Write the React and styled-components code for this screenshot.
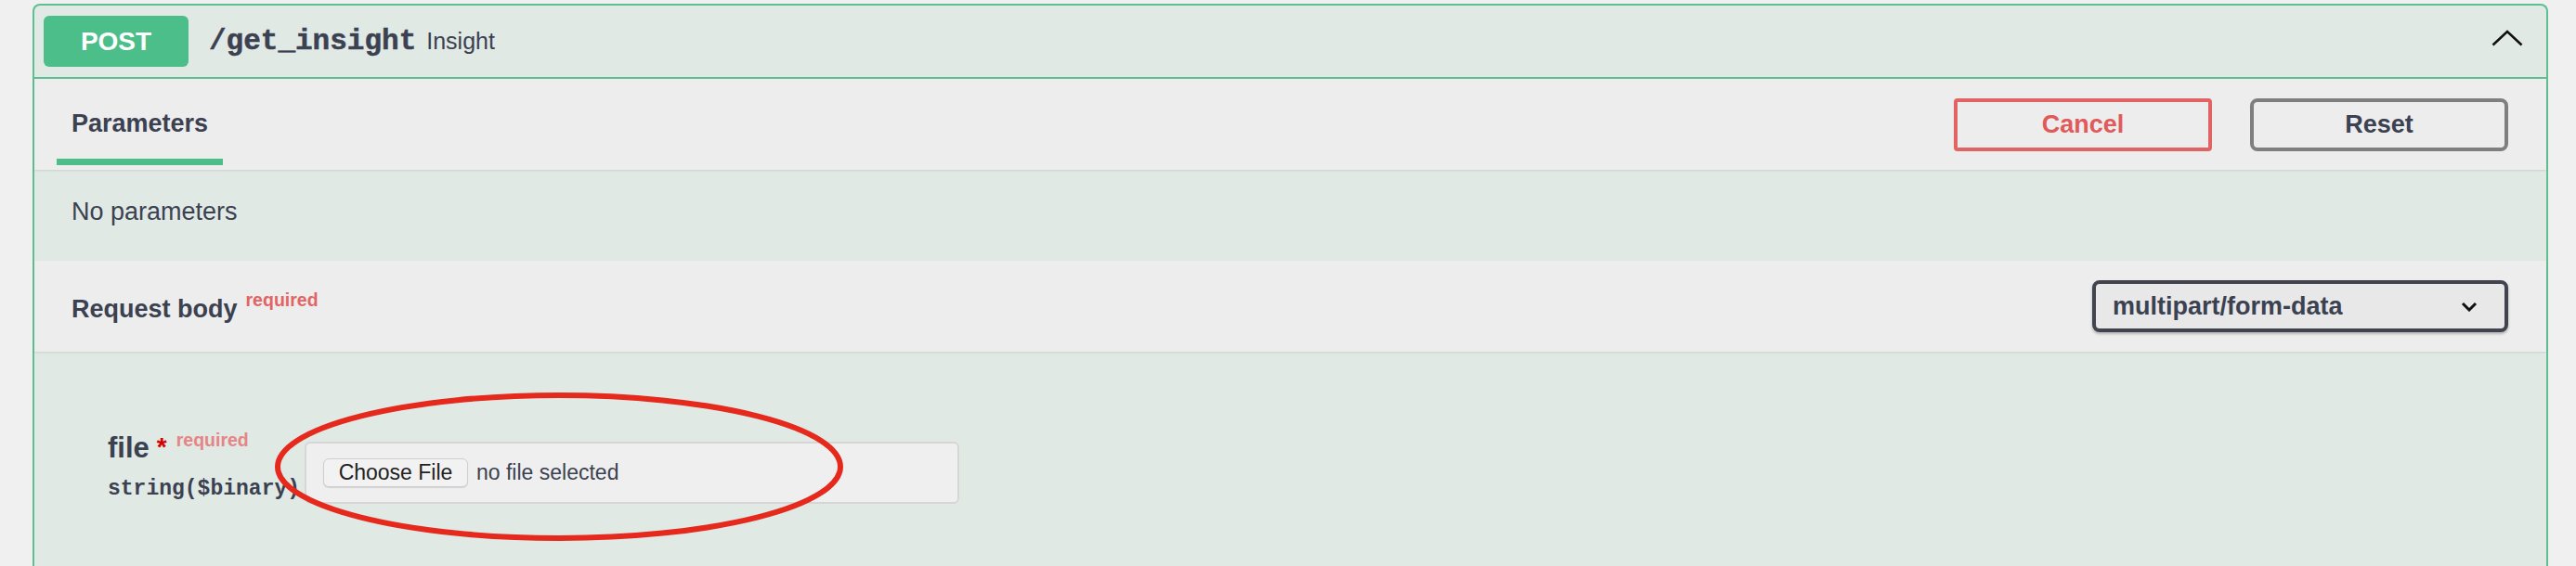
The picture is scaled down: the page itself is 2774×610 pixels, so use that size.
import React from 'react'
import styled, { createGlobalStyle } from 'styled-components'

const sans = `"Liberation Sans", Arial, Helvetica, sans-serif`
const mono = `"Liberation Mono", "Courier New", monospace`

const GlobalStyle = createGlobalStyle`
    body {
        margin: 0;
        background: #f0f0f0;
        font-family: ${sans};
        color: #3b4151;
    }
`

const App = () => {
    return (
        <>
            <GlobalStyle />
            <Page>
                <Opblock>
                    <Summary>
                        <Method>POST</Method>
                        <Path>/get_insight</Path>
                        <Description>Insight</Description>
                        <Toggle>
                            <svg width="34" height="18" viewBox="0 0 34 18">
                                <polyline points="1.5,16.5 17,2 32.5,16.5" fill="none" stroke="#111" strokeWidth="2.6" />
                            </svg>
                        </Toggle>
                    </Summary>

                    <SectionHeader $pad="0 41px 0 24px">
                        <Tab>Parameters</Tab>
                        <Actions>
                            <ActionButton $variant="cancel">Cancel</ActionButton>
                            <ActionButton>Reset</ActionButton>
                        </Actions>
                    </SectionHeader>

                    <PlainRow>No parameters</PlainRow>

                    <SectionHeader $pad="0 41px 0 40px">
                        <SectionTitle>
                            Request body<Required>required</Required>
                        </SectionTitle>
                        <Select>
                            <span>multipart/form-data</span>
                            <svg width="18" height="11" viewBox="0 0 18 11">
                                <polyline points="2,2 9,9 16,2" fill="none" stroke="#111" strokeWidth="3" />
                            </svg>
                        </Select>
                    </SectionHeader>

                    <Body>
                        <ParamRow>
                            <ParamInfo>
                                <ParamName>
                                    file<Star>*</Star><ParamRequired>required</ParamRequired>
                                </ParamName>
                                <ParamType>string($binary)</ParamType>
                            </ParamInfo>
                            <FileField>
                                <ChooseButton>Choose File</ChooseButton>
                                <FileStatus>no file selected</FileStatus>
                            </FileField>
                        </ParamRow>
                        {/* red hand marking over the file input */}
                        <Marker width="614" height="162" viewBox="0 0 614 162">
                            <ellipse cx="307" cy="81" rx="303" ry="77" fill="none" stroke="#e5291c" strokeWidth="6" />
                        </Marker>
                    </Body>
                </Opblock>
            </Page>
        </>
    )
}

const Page = styled.div`
    padding: 4px 30px 0 35px;
`

const Opblock = styled.div`
    border: 2px solid #5fbf92;
    border-bottom: none;
    border-radius: 8px 8px 0 0;
    background: #e1e9e5;
`

const Summary = styled.div`
    display: flex;
    align-items: center;
    height: 77px;
    padding: 0 25px 0 10px;
    border-bottom: 2px solid #5fbf92;
`

const Method = styled.div`
    width: 156px;
    height: 55px;
    border-radius: 6px;
    background: #4cbe8a;
    color: #fff;
    font-weight: 700;
    font-size: 28px;
    display: flex;
    align-items: center;
    justify-content: center;
`

const Path = styled.span`
    font-family: ${mono};
    font-weight: 700;
    font-size: 31px;
    padding: 0 11px 0 22px;
    -webkit-text-stroke: 0.5px #3b4151;
`

const Description = styled.span`
    font-size: 25px;
`

const Toggle = styled.div`
    margin-left: auto;
    display: flex;
    margin-top: -8px;
`

const SectionHeader = styled.div`
    display: flex;
    align-items: center;
    justify-content: space-between;
    height: 98px;
    box-sizing: border-box;
    padding: ${p => p.$pad};
    background: #ededed;
    box-shadow: 0 1px 2px rgba(0, 0, 0, 0.1);
    position: relative;
`

const Tab = styled.div`
    align-self: flex-end;
    margin-bottom: 5px;
    padding: 32px 16px 22px;
    line-height: 31px;
    font-size: 27px;
    font-weight: 700;
    border-bottom: 7px solid #4cbe8a;
`

const Actions = styled.div`
    display: flex;
    gap: 41px;
`

const ActionButton = styled.button`
    width: 278px;
    height: 57px;
    background: transparent;
    font-family: ${sans};
    font-size: 27px;
    font-weight: 700;
    border: 4px solid ${p => (p.$variant === 'cancel' ? '#e26363' : '#7f7f7f')};
    border-radius: ${p => (p.$variant === 'cancel' ? '4px' : '8px')};
    color: ${p => (p.$variant === 'cancel' ? '#e05a5a' : '#3b4151')};
`

const PlainRow = styled.div`
    height: 98px;
    box-sizing: border-box;
    padding: 0 0 8px 40px;
    display: flex;
    align-items: center;
    font-size: 27px;
`

const SectionTitle = styled.div`
    font-size: 27px;
    font-weight: 700;
`

const Required = styled.span`
    font-size: 19.5px;
    color: #e26464;
    margin-left: 9px;
    vertical-align: 12px;
`

const Select = styled.div`
    width: 448px;
    height: 56px;
    box-sizing: border-box;
    border: 4px solid #41444e;
    border-radius: 8px;
    background: #e8e8e8;
    box-shadow: 0 2px 3px rgba(0, 0, 0, 0.25);
    display: flex;
    align-items: center;
    justify-content: space-between;
    padding: 0 29px 0 18px;
    font-size: 27px;
    font-weight: 700;
`

const Body = styled.div`
    position: relative;
    min-height: 260px;
    padding: 85px 0 0 79px;
    box-sizing: border-box;
`

const ParamRow = styled.div`
    display: flex;
    align-items: flex-start;
`

const ParamInfo = styled.div`
    width: 212px;
`

const ParamName = styled.div`
    font-size: 31px;
    font-weight: 700;
    line-height: 37px;
    height: 37px;
    white-space: nowrap;
`

const Star = styled.span`
    color: #d40000;
    font-size: 28px;
    margin-left: 8px;
    position: relative;
    top: -2px;
`

const ParamRequired = styled.span`
    font-size: 19.5px;
    color: #e58585;
    padding-left: 10px;
    position: relative;
    top: -12px;
`

const ParamType = styled.div`
    font-family: ${mono};
    font-weight: 700;
    font-size: 23px;
    line-height: 27px;
    padding-top: 13px;
    white-space: nowrap;
`

const FileField = styled.div`
    margin-top: 12px;
    width: 705px;
    height: 67px;
    box-sizing: border-box;
    border: 2px solid #d6d6d6;
    border-radius: 6px;
    background: #efefef;
    display: flex;
    align-items: center;
    padding-left: 18px;
    gap: 9px;
`

const ChooseButton = styled.span`
    width: 156px;
    height: 31px;
    box-sizing: border-box;
    border: 1px solid #cfcfcf;
    border-radius: 6px;
    background: #f2f2f2;
    box-shadow: 0 1px 1px rgba(0, 0, 0, 0.12);
    display: flex;
    align-items: center;
    justify-content: center;
    font-size: 23px;
    color: #222;
`

const FileStatus = styled.span`
    font-size: 23px;
    color: #3b4151;
`

const Marker = styled.svg`
    position: absolute;
    left: 258px;
    top: 43px;
    pointer-events: none;
`

export default App
